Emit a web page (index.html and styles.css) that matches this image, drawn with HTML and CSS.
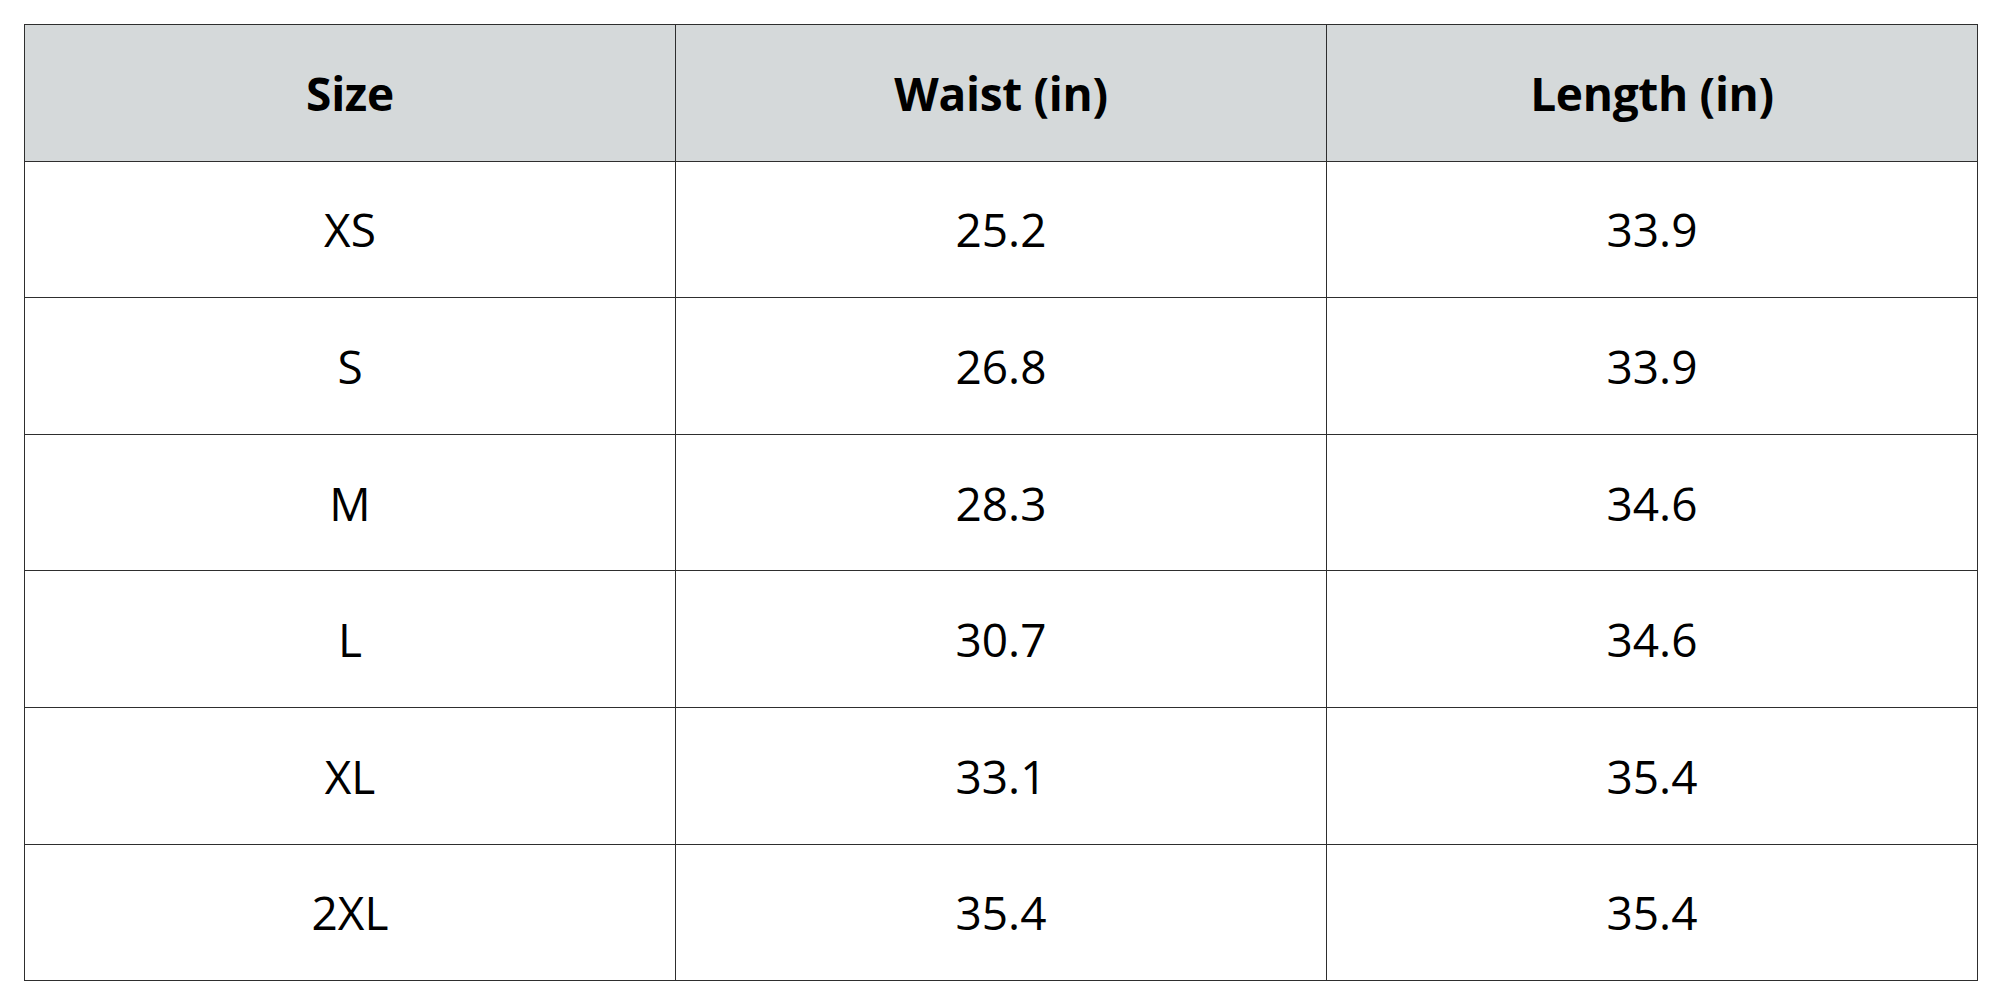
FILE: index.html
```html
<!DOCTYPE html>
<html lang="en">
<head>
<meta charset="utf-8">
<title>Size Chart</title>
<link rel="stylesheet" href="styles.css">
</head>
<body>
<main class="page">
  <table class="size-table">
    <thead>
      <tr><th>Size</th><th>Waist (in)</th><th>Length (in)</th></tr>
    </thead>
    <tbody>
      <tr><td>XS</td><td>25.2</td><td>33.9</td></tr>
      <tr><td>S</td><td>26.8</td><td>33.9</td></tr>
      <tr><td>M</td><td>28.3</td><td>34.6</td></tr>
      <tr><td>L</td><td>30.7</td><td>34.6</td></tr>
      <tr><td>XL</td><td>33.1</td><td>35.4</td></tr>
      <tr><td>2XL</td><td>35.4</td><td>35.4</td></tr>
    </tbody>
  </table>
</main>
</body>
</html>
```

FILE: styles.css
```css
html, body {
  margin: 0;
  padding: 0;
  background: #ffffff;
}

.page {
  padding: 24px 0 0 24px;
}

.size-table {
  width: 1954px;
  border-collapse: collapse;
  table-layout: fixed;
  font-family: "Open Sans", "Liberation Sans", sans-serif;
  color: #000000;
}

.size-table th,
.size-table td {
  height: 135.6px;
  padding: 0;
  text-align: center;
  vertical-align: middle;
  border: 1.5px solid #2e2e2e;
  font-size: 46px;
  line-height: 1;
}

.size-table th {
  background: #d5d9da;
  font-weight: 700;
  letter-spacing: -0.3px;
}

.size-table td {
  font-weight: 400;
}
```
